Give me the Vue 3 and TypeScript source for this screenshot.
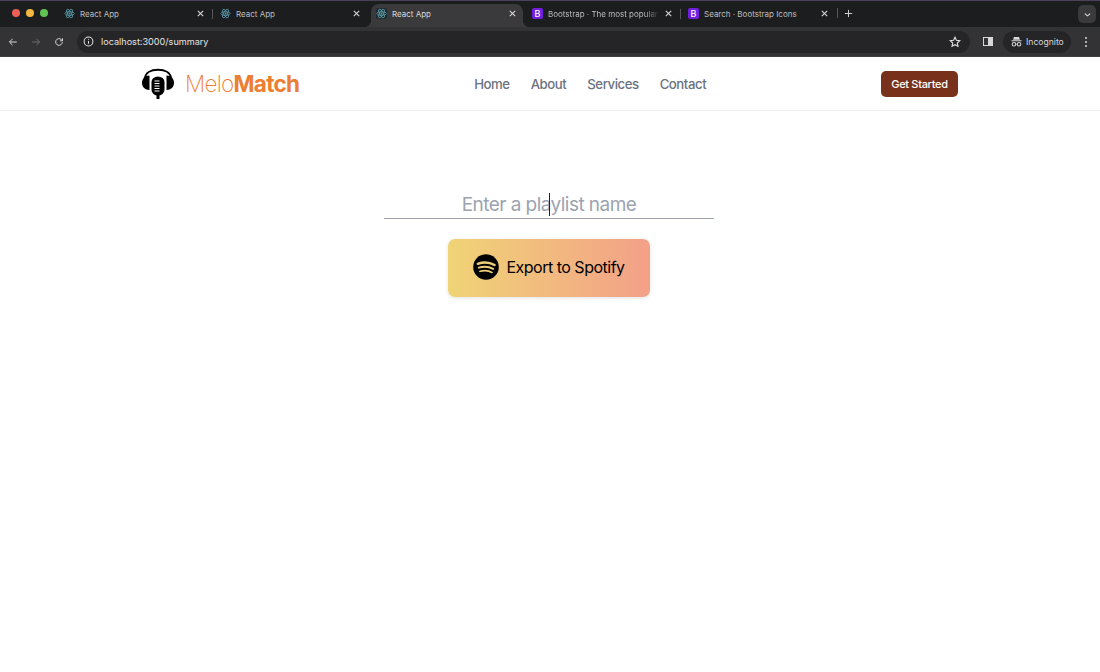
<script setup lang="ts">
interface Tab {
  title: string
  kind: 'react' | 'bootstrap'
  active?: boolean
  faded?: boolean
}

const tabs: Tab[] = [
  { title: 'React App', kind: 'react' },
  { title: 'React App', kind: 'react' },
  { title: 'React App', kind: 'react', active: true },
  { title: 'Bootstrap · The most popular', kind: 'bootstrap', faded: true },
  { title: 'Search · Bootstrap Icons', kind: 'bootstrap' },
]

const links = ['Home', 'About', 'Services', 'Contact']
</script>

<template>
  <div class="page">
    <div class="chrome">
      <div class="tabstrip">
        <div class="lights">
          <span class="light red"></span>
          <span class="light amber"></span>
          <span class="light green"></span>
        </div>
        <div class="tabs">
          <div
            v-for="(tab, i) in tabs"
            :key="i"
            class="tab"
            :class="{ active: tab.active, divided: i === 1 || i === 4 }"
          >
            <span v-if="tab.kind === 'react'" class="favicon-box">
              <svg class="favicon" viewBox="0 0 16 16" fill="none" stroke="#5fa8b8" stroke-width="1">
                <ellipse cx="8" cy="8" rx="7" ry="2.8" />
                <ellipse cx="8" cy="8" rx="7" ry="2.8" transform="rotate(60 8 8)" />
                <ellipse cx="8" cy="8" rx="7" ry="2.8" transform="rotate(120 8 8)" />
                <circle cx="8" cy="8" r="1.3" fill="#5fa8b8" stroke="none" />
              </svg>
            </span>
            <span v-else class="bs-icon">B</span>
            <span class="tab-title" :class="{ faded: tab.faded }">{{ tab.title }}</span>
            <svg class="tab-close" viewBox="0 0 10 10" stroke="#d8d8d8" stroke-width="1.2">
              <path d="M2 2l6 6M8 2l-6 6" />
            </svg>
          </div>
          <span class="tab-sep"></span>
          <svg class="new-tab" viewBox="0 0 10 10" stroke="#d0d0d0" stroke-width="1.1">
            <path d="M5 1v8M1 5h8" />
          </svg>
        </div>
        <div class="tab-menu">
          <svg viewBox="0 0 10 10" fill="none" stroke="#d8d8d8" stroke-width="1.3" width="9" height="9">
            <path d="M2 4l3 2.5L8 4" />
          </svg>
        </div>
      </div>
      <div class="toolbar">
        <svg class="nav-icon" viewBox="0 0 12 12" fill="none" stroke="#d8d8d8" stroke-width="1.2">
          <path d="M10.5 6H2M5.5 2.2L1.7 6l3.8 3.8" />
        </svg>
        <svg class="nav-icon fwd" viewBox="0 0 12 12" fill="none" stroke="#6f6f6f" stroke-width="1.2">
          <path d="M1.5 6H10M6.5 2.2L10.3 6l-3.8 3.8" />
        </svg>
        <svg class="nav-icon reload" viewBox="0 0 12 12" fill="none" stroke="#d8d8d8" stroke-width="1.2">
          <path d="M10 6.2A4 4 0 1 1 8.8 3.1L10 4.3" />
          <path d="M10.2 1.6v3H7.2" />
        </svg>
        <div class="omnibox">
          <span class="site-info">
            <svg viewBox="0 0 12 12" fill="none" stroke="#e4e4e4" stroke-width="1.1" width="11" height="11">
              <circle cx="6" cy="6" r="4.8" />
              <path d="M6 5.4v3M6 3.2v1" />
            </svg>
          </span>
          <span class="url">localhost:3000/summary</span>
          <svg class="star" viewBox="0 0 12 12" fill="none" stroke="#e0e0e0" stroke-width="1.1">
            <path d="M6 1.2l1.45 3.1 3.35.4-2.5 2.3.67 3.3L6 8.65 3.03 10.3l.67-3.3-2.5-2.3 3.35-.4z" />
          </svg>
        </div>
        <span class="side-panel"><span></span></span>
        <div class="incognito">
          <svg viewBox="0 0 14 12" fill="#d8d8d8" width="13" height="11">
            <path d="M4.2 1h5.6l.9 3H3.3zM1.5 4.7h11v1h-11z" />
            <circle cx="4.2" cy="9" r="1.9" fill="none" stroke="#d8d8d8" stroke-width="1.1" />
            <circle cx="9.8" cy="9" r="1.9" fill="none" stroke="#d8d8d8" stroke-width="1.1" />
            <path d="M6 8.5h2v.8H6z" />
          </svg>
          <span>Incognito</span>
        </div>
        <span class="kebab"><i></i><i></i><i></i></span>
      </div>
    </div>

    <header class="navbar">
      <div class="brand">
        <svg class="logo" viewBox="0 0 32 32">
          <path d="M3 10C3.500 5 8.500 1.800 16 1.800S28.500 5 29 10" fill="none" stroke="#000" stroke-width="2" />
          <path d="M7.500 7.500v14.500C3 22 0 19 0 14.800S3 7.500 7.500 7.500z" />
          <path d="M24.500 7.500v14.500c4.500 0 7.500-3 7.500-7.200s-3-7.300-7.500-7.300z" />
          <path d="M9.500 14a6.500 5.500 0 0 1 13 0v7.500c0 3-2.500 5.500-5 5.900V31h-3v-3.600c-2.500-.4-5-2.900-5-5.900z" />
          <path d="M12.500 13h5M12.500 15.500h5M12.500 18h5M12.500 20.500h5M12.500 23h5" stroke="#fff" stroke-width="1" />
        </svg>
        <span class="wordmark">Melo<b>Match</b></span>
      </div>
      <nav class="links">
        <a v-for="link in links" :key="link">{{ link }}</a>
      </nav>
      <button class="cta">Get Started</button>
    </header>

    <main class="content">
      <div class="name-field">
        <input type="text" placeholder="Enter a playlist name" />
        <span class="caret"></span>
      </div>
      <button class="export">
        <svg class="spotify" viewBox="0 0 26 26">
          <circle cx="13" cy="13" r="12.800" fill="#000" />
          <g fill="none" stroke="#f0cf7c" stroke-linecap="round">
            <path d="M4.800 9.800c5.500-2 12-1.500 16.800 1.200" stroke-width="2.400" />
            <path d="M5.800 13.600c4.800-1.400 10.200-1 14.400 1.200" stroke-width="2" />
            <path d="M7 17.300c4-1 8.700-.7 12 1.100" stroke-width="1.700" />
          </g>
        </svg>
        <span>Export to Spotify</span>
      </button>
    </main>
  </div>
</template>

<style>
html,
body {
  margin: 0;
  background: #fff;
}
</style>

<style scoped>
.page {
  width: 1100px;
  height: 672px;
  overflow: hidden;
  font-family: Inter, "Liberation Sans", sans-serif;
  background: #fff;
}
.chrome {
  background: #1f2022;
  color: #e0e0e0;
}
.tabstrip {
  height: 27px;
  box-sizing: border-box;
  display: flex;
  align-items: flex-end;
  background: #1c1d1f;
  border-top: 1px solid #4a4258;
}
.lights {
  width: 59px;
  height: 26px;
  display: flex;
  align-items: center;
  gap: 6px;
  padding: 0 0 2px 12px;
  box-sizing: border-box;
  flex: none;
}
.light {
  width: 8px;
  height: 8px;
  border-radius: 50%;
}
.red {
  background: #ec5f57;
}
.amber {
  background: #f3b842;
}
.green {
  background: #5fc454;
}
.tabs {
  display: flex;
  align-items: flex-end;
  flex: 1;
  min-width: 0;
}
.tab {
  width: 156px;
  height: 23px;
  display: flex;
  align-items: center;
  gap: 5px;
  padding: 0 10px 4px 5px;
  box-sizing: border-box;
  position: relative;
  font-size: 8px;
  color: #bdbdbd;
  flex: none;
}
.tab.active {
  width: 152px;
  margin-right: 4px;
  padding-right: 6px;
  background: #3a3a3c;
  border-radius: 8px 8px 0 0;
  color: #d8d8d8;
}
.tab.active::before,
.tab.active::after {
  content: "";
  position: absolute;
  bottom: 0;
  width: 7px;
  height: 7px;
}
.tab.active::before {
  left: -7px;
  background: radial-gradient(circle at 0 0, transparent 7px, #3a3a3c 7.500px);
}
.tab.active::after {
  right: -7px;
  background: radial-gradient(circle at 100% 0, transparent 7px, #3a3a3c 7.500px);
}
.tab.divided::before {
  content: "";
  position: absolute;
  left: -3px;
  top: 5px;
  width: 1px;
  height: 10px;
  background: #555;
}
.tab-sep {
  width: 1px;
  height: 10px;
  margin: 0 0 9px -2px;
  background: #555;
  flex: none;
}
.favicon-box {
  width: 11px;
  height: 11px;
  flex: none;
  display: flex;
}
.active .favicon-box {
  background: #232a2e;
  border-radius: 2px;
}
.favicon {
  width: 11px;
  height: 11px;
}
.bs-icon {
  width: 11px;
  height: 11px;
  border-radius: 2px;
  background: #6f1fe0;
  color: #fff;
  font-size: 9px;
  font-weight: 500;
  line-height: 11px;
  text-align: center;
  flex: none;
}
.tab-title {
  flex: 1;
  min-width: 0;
  white-space: nowrap;
}
.tab-title.faded {
  -webkit-mask-image: linear-gradient(90deg, #000 88%, transparent 100%);
  mask-image: linear-gradient(90deg, #000 88%, transparent 100%);
}
.tab-close {
  width: 9px;
  height: 9px;
  flex: none;
}
.new-tab {
  width: 9px;
  height: 9px;
  margin: 0 0 9px 6px;
  flex: none;
}
.tab-menu {
  width: 18px;
  height: 18px;
  margin: 0 4px 4px 0;
  border-radius: 5px;
  background: #3a3a3c;
  display: flex;
  align-items: center;
  justify-content: center;
  flex: none;
}
.toolbar {
  height: 30px;
  display: flex;
  align-items: center;
  background: #333335;
  border-bottom: 1px solid #3f3f41;
  box-sizing: border-box;
  padding-left: 8px;
}
.nav-icon {
  width: 10px;
  height: 10px;
  flex: none;
  margin-right: 13px;
}
.reload {
  margin-right: 13px;
}
.omnibox {
  width: 893px;
  height: 22px;
  border-radius: 11px;
  background: #252527;
  display: flex;
  align-items: center;
  box-sizing: border-box;
  padding: 0 9px 0 5px;
  flex: none;
}
.site-info {
  width: 12px;
  display: flex;
  justify-content: center;
  margin: 0 7px 0 0;
}
.url {
  flex: 1;
  font-size: 9.100px;
  color: #e4e4e4;
}
.star {
  width: 12px;
  height: 12px;
}
.side-panel {
  width: 10px;
  height: 9px;
  margin-left: 13px;
  border: 1px solid #d8d8d8;
  box-sizing: border-box;
  display: flex;
  justify-content: flex-end;
  flex: none;
}
.side-panel span {
  width: 4px;
  background: #d8d8d8;
}
.incognito {
  width: 68px;
  height: 22px;
  margin-left: 10px;
  border-radius: 11px;
  background: #252527;
  display: flex;
  align-items: center;
  gap: 3px;
  padding-left: 7px;
  box-sizing: border-box;
  font-size: 8.600px;
  color: #d8d8d8;
  flex: none;
}
.kebab {
  margin-left: 14px;
  display: flex;
  flex-direction: column;
  gap: 2px;
}
.kebab i {
  width: 2px;
  height: 2px;
  border-radius: 50%;
  background: #d8d8d8;
}
.navbar {
  height: 54px;
  box-sizing: border-box;
  padding: 0 142px;
  display: flex;
  align-items: center;
  justify-content: space-between;
  border-bottom: 1px solid #efefef;
}
.brand {
  display: flex;
  align-items: center;
  gap: 11px;
}
.logo {
  width: 32px;
  height: 32px;
  flex: none;
}
.wordmark {
  font-size: 22.500px;
  font-weight: 200;
  letter-spacing: -0.7px;
  color: #ed7d31;
}
.wordmark b {
  font-weight: 700;
}
.links {
  display: flex;
  gap: 21px;
}
.links a {
  font-size: 13.200px;
  font-weight: 500;
  letter-spacing: -0.45px;
  color: #6b7280;
}
.cta {
  width: 77px;
  height: 26px;
  padding: 0;
  border: none;
  border-radius: 5px;
  background: #78321b;
  color: #fff;
  font-family: inherit;
  font-size: 11px;
  font-weight: 500;
  letter-spacing: -0.3px;
}
.content {
  display: flex;
  flex-direction: column;
  align-items: center;
  padding: 77px 2px 0 0;
}
.name-field {
  position: relative;
  width: 330px;
}
.name-field input {
  display: block;
  width: 100%;
  height: 31px;
  box-sizing: border-box;
  padding: 2px 0 0;
  border: none;
  border-bottom: 1px solid #9ca3af;
  outline: none;
  background: transparent;
  text-align: center;
  font-family: inherit;
  font-size: 19px;
  letter-spacing: -0.55px;
  color: #111;
}
.name-field input::placeholder {
  color: #9ca3af;
  opacity: 1;
}
.caret {
  position: absolute;
  left: 165px;
  top: 5px;
  width: 1px;
  height: 23px;
  background: #222;
}
.export {
  width: 202px;
  height: 58px;
  margin-top: 20px;
  padding: 0 0 2px;
  border: none;
  border-radius: 7px;
  background: linear-gradient(90deg, #f0d476, #f3a088);
  box-shadow: 0 1px 4px rgba(0, 0, 0, 0.12);
  display: flex;
  align-items: center;
  justify-content: center;
  gap: 7px;
  font-family: inherit;
  font-size: 16px;
  letter-spacing: -0.5px;
  color: #000;
}
.spotify {
  width: 26px;
  height: 26px;
  flex: none;
}
</style>
